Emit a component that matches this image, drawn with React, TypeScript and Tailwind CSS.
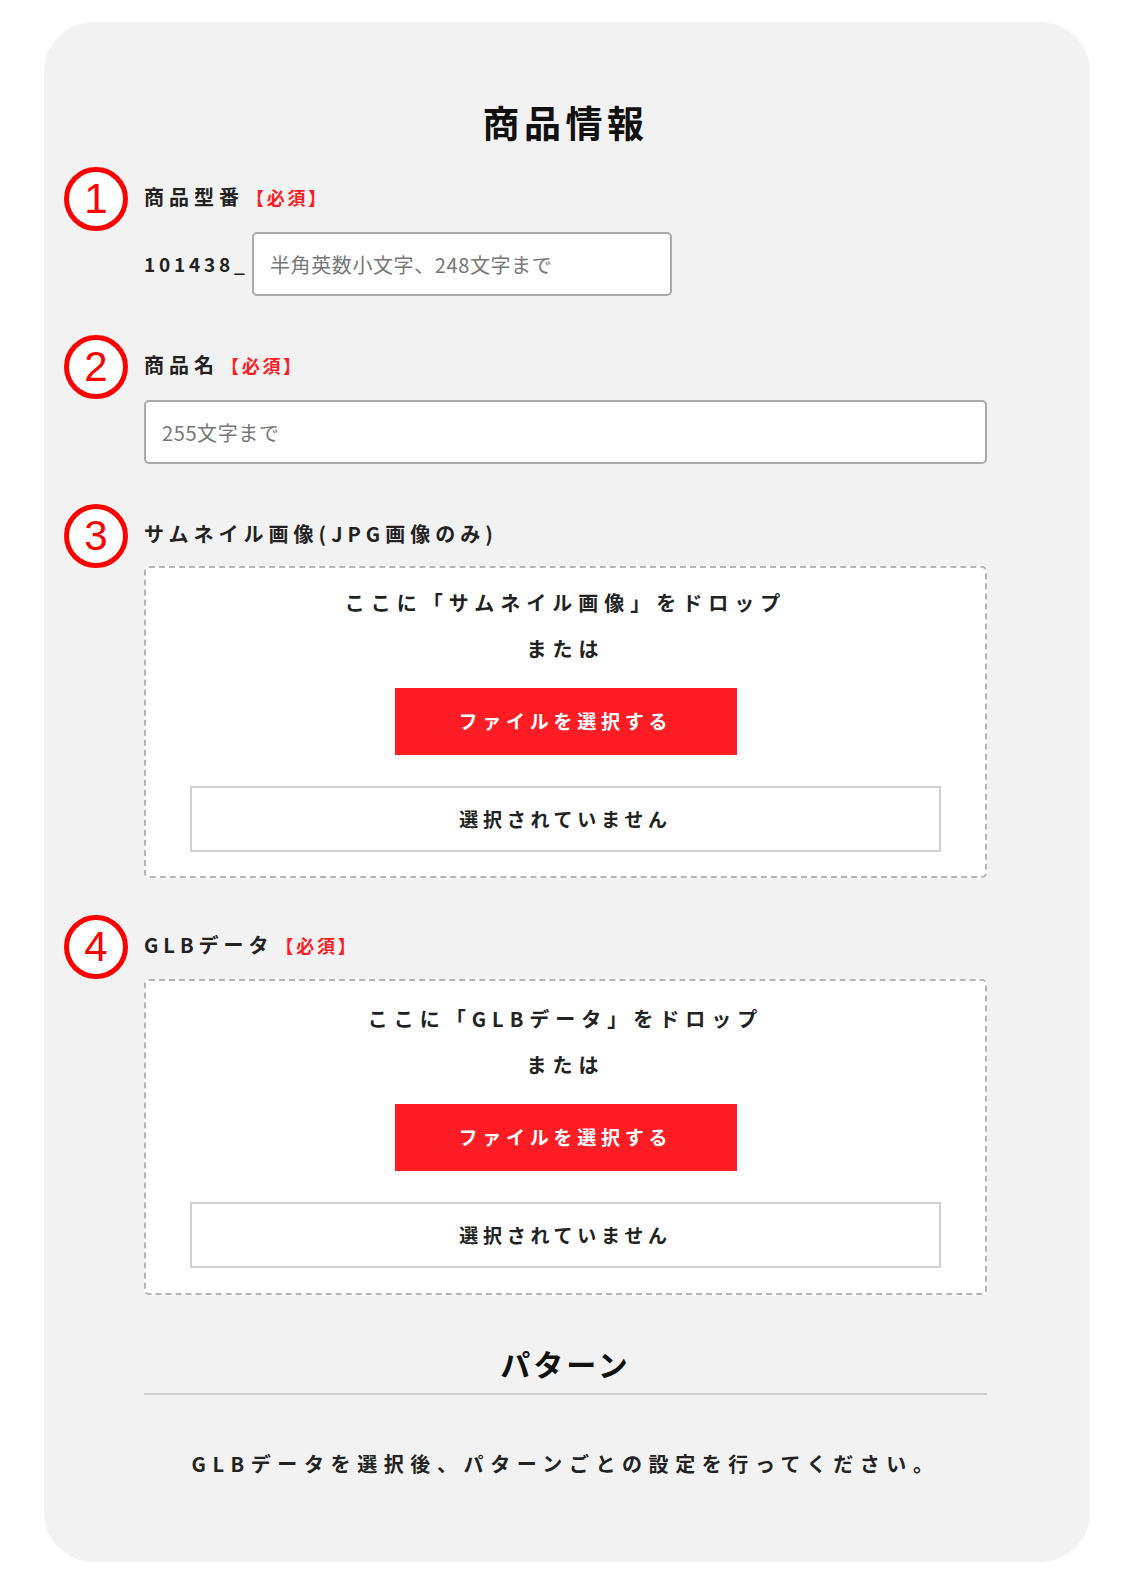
import React from 'react';

const jp = "font-['Noto_Sans_CJK_JP','Noto_Sans',sans-serif]";

const Marker: React.FC<{ n: number }> = ({ n }) => (
  <div className="absolute left-[-80px] top-1/2 -translate-y-1/2 mt-[2px] w-[64px] h-[64px] rounded-full border-[5px] border-[#ff0000] bg-white flex items-center justify-center">
    <span className="font-['Liberation_Sans',sans-serif] text-[42px] leading-none font-light text-[#ff0000]">{n}</span>
  </div>
);

const Required: React.FC = () => (
  <span className="ml-[2px] text-[18px] font-bold tracking-[0.15em] text-[#ff1d25]">【必須】</span>
);

const Label: React.FC<{ n: number; children: React.ReactNode; required?: boolean }> = ({ n, children, required }) => (
  <div className="relative flex items-center h-[28px]">
    <Marker n={n} />
    <span className="text-[20px] leading-[28px] font-bold tracking-[0.25em] text-[#222]">{children}</span>
    {required && <Required />}
  </div>
);

const DropZone: React.FC<{ target: string; pad: string }> = ({ target, pad }) => (
  <div className={`border-2 border-dashed border-[#b5b5b5] rounded-[5px] bg-white px-[44px] flex flex-col items-center ${pad}`}>
    <p className="text-[20px] leading-[46px] font-bold tracking-[0.3em] text-[#222]">ここに「{target}」をドロップ</p>
    <p className="text-[20px] leading-[46px] font-bold tracking-[0.3em] text-[#222]">または</p>
    <button className="mt-[16px] w-[342px] h-[67px] bg-[#ff1d25] text-white text-[19px] font-bold tracking-[0.25em]">
      ファイルを選択する
    </button>
    <div className="mt-[31px] w-full h-[66px] border-2 border-[#d0d0d0] flex items-center justify-center">
      <span className="text-[19px] font-bold tracking-[0.25em] text-[#222]">選択されていません</span>
    </div>
  </div>
);

const App: React.FC = () => {
  return (
    <div className={`min-h-screen bg-white pt-[22px] pb-[23px] ${jp}`}>
      <section className="mx-auto w-[1046px] bg-[#f2f2f2] rounded-[50px] pt-[76px] pb-[84px] pl-[100px] pr-[103px]">
        <h1 className="text-center text-[37px] leading-[48px] font-bold tracking-[0.12em] text-[#111]">商品情報</h1>

        <div className="mt-[37px]">
          <Label n={1} required>商品型番</Label>
          <div className="mt-[21px] flex items-center">
            <span className="w-[108px] text-[19px] font-bold tracking-[0.2em] text-[#222]">101438_</span>
            <input
              className="w-[420px] h-[64px] bg-white border-2 border-[#aaaaaa] rounded-[5px] px-[16px] text-[20px] tracking-[0.03em] placeholder:text-[#777] outline-none"
              placeholder="半角英数小文字、248文字まで"
            />
          </div>
        </div>

        <div className="mt-[55px]">
          <Label n={2} required>商品名</Label>
          <input
            className="mt-[21px] w-full h-[64px] bg-white border-2 border-[#aaaaaa] rounded-[5px] px-[16px] text-[20px] tracking-[0.03em] placeholder:text-[#777] outline-none"
            placeholder="255文字まで"
          />
        </div>

        <div className="mt-[56px]">
          <Label n={3}>サムネイル画像(JPG画像のみ)</Label>
          <div className="mt-[18px]">
            <DropZone target="サムネイル画像" pad="pt-[12px] pb-[24px]" />
          </div>
        </div>

        <div className="mt-[53px]">
          <Label n={4} required>GLBデータ</Label>
          <div className="mt-[20px]">
            <DropZone target="GLBデータ" pad="pt-[15px] pb-[25px]" />
          </div>
        </div>

        <h2 className="mt-[48px] text-center text-[30px] leading-[40px] font-bold tracking-[0.1em] text-[#111]">パターン</h2>
        <div className="mt-[10px] h-[2px] bg-[#cfcfcf]" />
        <p className="mt-[55px] text-center text-[20px] leading-[28px] font-bold tracking-[0.33em] text-[#222]">
          GLBデータを選択後、パターンごとの設定を行ってください。
        </p>
      </section>
    </div>
  );
};

export default App;
